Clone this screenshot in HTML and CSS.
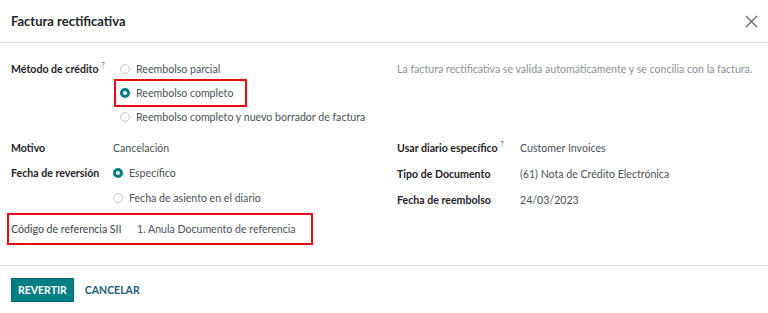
FILE: index.html
```html
<!DOCTYPE html>
<html>
  <head>
    <title>Factura rectificativa</title>
    <link rel="stylesheet" href="styles.css">
  </head>
  <body>
    <div class="dialog">
      <div class="dialog-header">
        <p class="dialog-title">Factura rectificativa</p>
        <button class="close-button" aria-label="Cerrar">
          <svg width="13" height="13" viewBox="0 0 13 13">
            <path d="M1 1 L12 12 M12 1 L1 12" stroke="#5f6368" stroke-width="1.2" fill="none"/>
          </svg>
        </button>
      </div>

      <div class="dialog-body">
        <div class="method-section">
          <div class="method-field">
            <span class="field-label method-label">Método de crédito<sup class="help">?</sup></span>
            <div class="radio-list">
              <label class="radio-option"><span class="radio"></span>Reembolso parcial</label>
              <label class="radio-option is-marked"><span class="radio is-checked"></span>Reembolso completo</label>
              <label class="radio-option"><span class="radio"></span>Reembolso completo y nuevo borrador de factura</label>
            </div>
          </div>
          <p class="method-hint">La factura rectificativa se valida automáticamente y se concilia con la factura.</p>
        </div>

        <div class="fields-section">
          <div class="field-group left-group">
            <div class="field-row">
              <span class="field-label">Motivo</span>
              <span class="field-value">Cancelación</span>
            </div>
            <div class="field-row">
              <span class="field-label">Fecha de reversión</span>
              <label class="radio-option"><span class="radio is-checked"></span>Específico</label>
            </div>
            <div class="field-row">
              <span class="field-label"></span>
              <label class="radio-option"><span class="radio"></span>Fecha de asiento en el diario</label>
            </div>
          </div>

          <div class="field-group right-group">
            <div class="field-row">
              <span class="field-label">Usar diario específico<sup class="help">?</sup></span>
              <span class="field-value">Customer Invoices</span>
            </div>
            <div class="field-row">
              <span class="field-label">Tipo de Documento</span>
              <span class="field-value">(61) Nota de Crédito Electrónica</span>
            </div>
            <div class="field-row">
              <span class="field-label">Fecha de reembolso</span>
              <span class="field-value">24/03/2023</span>
            </div>
          </div>
        </div>

        <div class="sii-row">
          <span class="sii-label">Código de referencia SII</span>
          <span class="field-value">1. Anula Documento de referencia</span>
        </div>
      </div>

      <div class="dialog-footer">
        <button class="primary-button">Revertir</button>
        <button class="secondary-button">Cancelar</button>
      </div>
    </div>
  </body>
</html>
```

FILE: styles.css
```css
body {
  margin: 0;
  background-color: white;
  color: #374151;
  font-family: Lato, "Liberation Sans", sans-serif;
  font-size: 10.6px;
}

p {
  margin: 0;
}

.dialog {
  width: 768px;
}

.dialog-header {
  display: flex;
  align-items: center;
  justify-content: space-between;
  height: 42px;
  padding: 0 10px 0 11px;
  border-bottom: 1px solid #dedede;
}

.dialog-title {
  font-size: 13px;
  font-weight: bold;
  color: #212529;
}

.close-button {
  border: none;
  background: transparent;
  padding: 0;
  height: 13px;
  cursor: pointer;
}

.dialog-body {
  padding: 14px 11px 20px 11px;
}

.method-section {
  display: flex;
}

.method-field {
  display: flex;
  width: 386px;
}

.field-label {
  font-weight: bold;
  color: #1f2328;
  line-height: 24px;
}

.method-label {
  width: 109px;
  flex-shrink: 0;
}

.help {
  font-size: 7px;
  font-weight: normal;
  line-height: 0;
  vertical-align: 5px;
  color: #35607d;
  margin-left: 3px;
}

.method-hint {
  line-height: 24px;
  white-space: nowrap;
  color: #8d9196;
}

.radio-list {
  display: flex;
  flex-direction: column;
}

.radio-option {
  display: flex;
  align-items: center;
  gap: 6px;
  height: 24px;
  color: #4b5057;
}

.is-marked {
  width: fit-content;
  margin-left: -4px;
  padding: 0 12px 0 4px;
  box-shadow: 0 0 0 2px #ea0a12;
}

.radio {
  box-sizing: border-box;
  width: 10px;
  height: 10px;
  border: 1px solid #c8c8c8;
  border-radius: 50%;
  background-color: white;
}

.radio.is-checked {
  border: 3px solid #017e84;
}

.fields-section {
  display: flex;
  margin-top: 6px;
}

.left-group {
  width: 386px;
}

.field-row {
  display: flex;
  align-items: center;
  height: 25px;
}

.right-group .field-row {
  height: 26px;
}

.left-group .field-label {
  width: 102px;
}

.right-group .field-label {
  width: 123px;
}

.field-value {
  color: #4b5057;
}

.sii-row {
  display: flex;
  align-items: center;
  width: fit-content;
  height: 28px;
  margin-left: -4px;
  padding: 0 15px 0 2px;
  border: 2px solid #ea0a12;
}

.sii-label {
  width: 126px;
  color: #3b4148;
}

.dialog-footer {
  display: flex;
  align-items: center;
  gap: 0;
  padding: 12px 11px;
  border-top: 1px solid #dedede;
}

.primary-button {
  height: 24px;
  padding: 0 6px;
  border: 1px solid #016b70;
  background-color: #017e84;
  color: white;
  font-family: Lato, "Liberation Sans", sans-serif;
  font-size: 10.5px;
  font-weight: bold;
  text-transform: uppercase;
  cursor: pointer;
}

.secondary-button {
  height: 24px;
  padding: 0 11px;
  border: none;
  background: transparent;
  color: #1a5d78;
  font-family: Lato, "Liberation Sans", sans-serif;
  font-size: 10.5px;
  font-weight: bold;
  text-transform: uppercase;
  cursor: pointer;
}
```
